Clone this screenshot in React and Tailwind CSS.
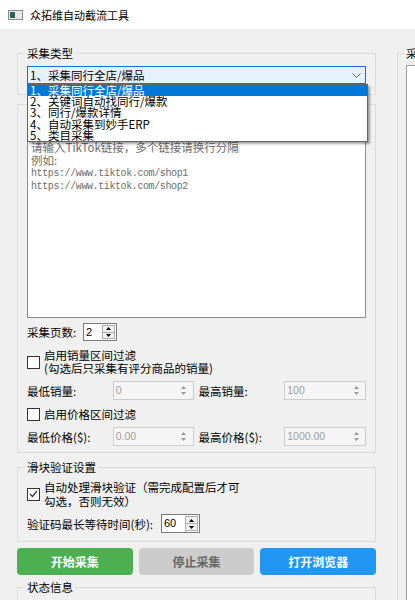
import React from 'react';

const mono = "font-['Liberation_Mono',monospace]";
const num = "font-['Liberation_Sans',sans-serif]";

function GroupBox({ label, labelLeft = 'left-[7px]', className = '', children }) {
  return (
    <div className={`relative border border-[#dcdcdc] ${className}`}>
      {label && (
        <span className={`absolute ${labelLeft} -top-[8px] bg-[#f0f0f0] px-[2px] text-[11.5px] leading-[14px] text-black whitespace-nowrap`}>
          {label}
        </span>
      )}
      {children}
    </div>
  );
}

function Tri({ up, color = '#000' }) {
  return (
    <svg width="5" height="3" viewBox="0 0 5 3">
      <path d={up ? 'M0 3L2.5 0L5 3Z' : 'M0 0L2.5 3L5 0Z'} fill={color} />
    </svg>
  );
}

function Spin({ value, className = '' }) {
  return (
    <div className={`flex h-[18px] bg-white border border-[#7a7a7a] ${className}`}>
      <span className={`flex-1 pl-[2px] text-[11px] leading-[16px] ${num}`}>{value}</span>
      <div className="w-[13px] flex flex-col m-[1px] ml-0">
        <div className="flex-1 flex items-center justify-center border border-[#adadad] bg-[#f0f0f0]">
          <Tri up />
        </div>
        <div className="flex-1 flex items-center justify-center border border-t-0 border-[#adadad] bg-[#f0f0f0]">
          <Tri />
        </div>
      </div>
    </div>
  );
}

function DisabledSpin({ value, className = '' }) {
  return (
    <div className={`flex items-center h-[19px] bg-[#f5f5f5] border border-[#cccccc] ${className}`}>
      <span className={`flex-1 pl-[2px] text-[10.5px] leading-[17px] text-[#a0a0a0] ${num}`}>{value}</span>
      <div className="w-[18px] flex flex-col items-center gap-[3px]">
        <Tri up color="#9a9a9a" />
        <Tri color="#9a9a9a" />
      </div>
    </div>
  );
}

function Check({ checked }) {
  return (
    <div className="w-[13px] h-[13px] shrink-0 border border-[#333333] bg-white flex items-center justify-center">
      {checked && (
        <svg width="9" height="8" viewBox="0 0 9 8">
          <path d="M1 4l2.5 2.5L8 1" stroke="#333" fill="none" strokeWidth="1.2" />
        </svg>
      )}
    </div>
  );
}

const options = [
  '1、采集同行全店/爆品',
  '2、关键词自动找同行/爆款',
  '3、同行/爆款详情',
  '4、自动采集到妙手ERP',
  '5、类目采集',
];

export default function App() {
  return (
    <div className="w-[415px] h-[600px] overflow-hidden flex flex-col bg-[#f0f0f0] font-['Noto_Sans_CJK_SC',sans-serif] text-black">
      {/* Title bar */}
      <div className="h-[29px] shrink-0 bg-white flex items-center pl-[8px]">
        <svg width="15" height="10" viewBox="0 0 15 10">
          <rect x="0.5" y="0.5" width="14" height="9" fill="#e6e6e6" stroke="#8c8c8c" />
          <rect x="2" y="2" width="5" height="6" fill="#2f5f58" />
        </svg>
        <span className="ml-[7px] text-[11px] leading-[14px]">众拓维自动截流工具</span>
      </div>

      <div className="flex-1 flex min-h-0">
        {/* Left column */}
        <div className="w-[359px] ml-[17px] shrink-0 pt-[24px] flex flex-col">
          <GroupBox label="采集类型" className="pt-[12px] pb-[10px] px-[9px]">
            <div className="relative">
              <div className="h-[18px] flex items-center justify-between bg-[#e5f1fb] border border-[#0078d7] pl-[2px] pr-[4px]">
                <span className="text-[11.5px] leading-[16px]">{options[0]}</span>
                <svg width="9" height="5" viewBox="0 0 9 5">
                  <path d="M0.5 0.5L4.5 4.5L8.5 0.5" stroke="#606060" fill="none" />
                </svg>
              </div>
              <div className="absolute top-full left-0 w-[341px] z-10 bg-white border border-[#646464] shadow-[2px_2px_2px_rgba(0,0,0,0.35)]">
                {options.map((o, i) => (
                  <div
                    key={o}
                    className={`h-[11.2px] pl-[2px] text-[11.5px] leading-[11.2px] whitespace-nowrap ${
                      i === 0 ? 'bg-[#0078d7] text-white' : 'text-black'
                    }`}
                  >
                    {o}
                  </div>
                ))}
              </div>
            </div>
          </GroupBox>

          <GroupBox className="mt-[9px] pt-[34px] pb-[6px] px-[9px]">
            <div className="h-[179px] bg-white border border-[#8c8c8c] pl-[3px] pt-[1px] text-[#6d6d6d]">
              <div className="text-[11.5px] leading-[13px] whitespace-nowrap">请输入TikTok链接，多个链接请换行分隔</div>
              <div className="text-[11.5px] leading-[13px]">例如:</div>
              <div className={`${mono} text-[10px] tracking-[-0.4px] leading-[13px]`}>https://www.tiktok.com/shop1</div>
              <div className={`${mono} text-[10px] tracking-[-0.4px] leading-[13px]`}>https://www.tiktok.com/shop2</div>
            </div>

            <div className="mt-[5px] flex items-center h-[18px]">
              <span className="w-[56px] text-[11.5px] leading-[14px]">采集页数:</span>
              <Spin value="2" className="w-[34px]" />
            </div>

            <div className="mt-[8px] flex items-center gap-[4px]">
              <Check />
              <div className="text-[11.5px] leading-[13px]">
                <div>启用销量区间过滤</div>
                <div>(勾选后只采集有评分商品的销量)</div>
              </div>
            </div>

            <div className="mt-[6px] flex items-center">
              <span className="w-[86px] text-[11.5px] leading-[14px]">最低销量:</span>
              <DisabledSpin value="0" className="w-[81px]" />
              <span className="ml-[5px] w-[86px] text-[11.5px] leading-[14px]">最高销量:</span>
              <DisabledSpin value="100" className="w-[82px]" />
            </div>

            <div className="mt-[6px] h-[16px] flex items-center gap-[4px]">
              <Check />
              <span className="text-[11.5px] leading-[14px]">启用价格区间过滤</span>
            </div>

            <div className="mt-[5px] flex items-center">
              <span className="w-[86px] text-[11.5px] leading-[14px]">最低价格($):</span>
              <DisabledSpin value="0.00" className="w-[81px]" />
              <span className="ml-[5px] w-[86px] text-[11.5px] leading-[14px]">最高价格($):</span>
              <DisabledSpin value="1000.00" className="w-[82px]" />
            </div>
          </GroupBox>

          <GroupBox label="滑块验证设置" className="mt-[14px] pt-[12px] pb-[8px] px-[9px]">
            <div className="flex items-center gap-[4px]">
              <Check checked />
              <div className="text-[11.5px] leading-[14px]">
                <div>自动处理滑块验证（需完成配置后才可</div>
                <div>勾选，否则无效）</div>
              </div>
            </div>
            <div className="mt-[6px] flex items-center">
              <span className="w-[134px] text-[11.5px] leading-[14px] whitespace-nowrap">验证码最长等待时间(秒):</span>
              <Spin value="60" className="w-[39px] h-[19px]" />
            </div>
          </GroupBox>

          <div className="mt-[6px] flex gap-[6px] h-[27px] shrink-0">
            <button className="flex-1 rounded-[4px] bg-[#4caf50] text-white text-[12px] font-bold">开始采集</button>
            <button className="flex-1 rounded-[4px] bg-[#cccccc] text-[#666666] text-[12px] font-bold">停止采集</button>
            <button className="flex-1 rounded-[4px] bg-[#2196f3] text-white text-[12px] font-bold">打开浏览器</button>
          </div>

          <GroupBox label="状态信息" className="mt-[12px] h-[60px] shrink-0" />
        </div>

        {/* Right column (cut off) */}
        <div className="ml-[21px] w-[200px] shrink-0 pt-[24px]">
          <GroupBox label="采" labelLeft="left-[6px]" className="h-[600px] pl-[8px] pt-[11px]">
            <div className="h-full bg-white border border-[#a0a0a0]" />
          </GroupBox>
        </div>
      </div>
    </div>
  );
}
